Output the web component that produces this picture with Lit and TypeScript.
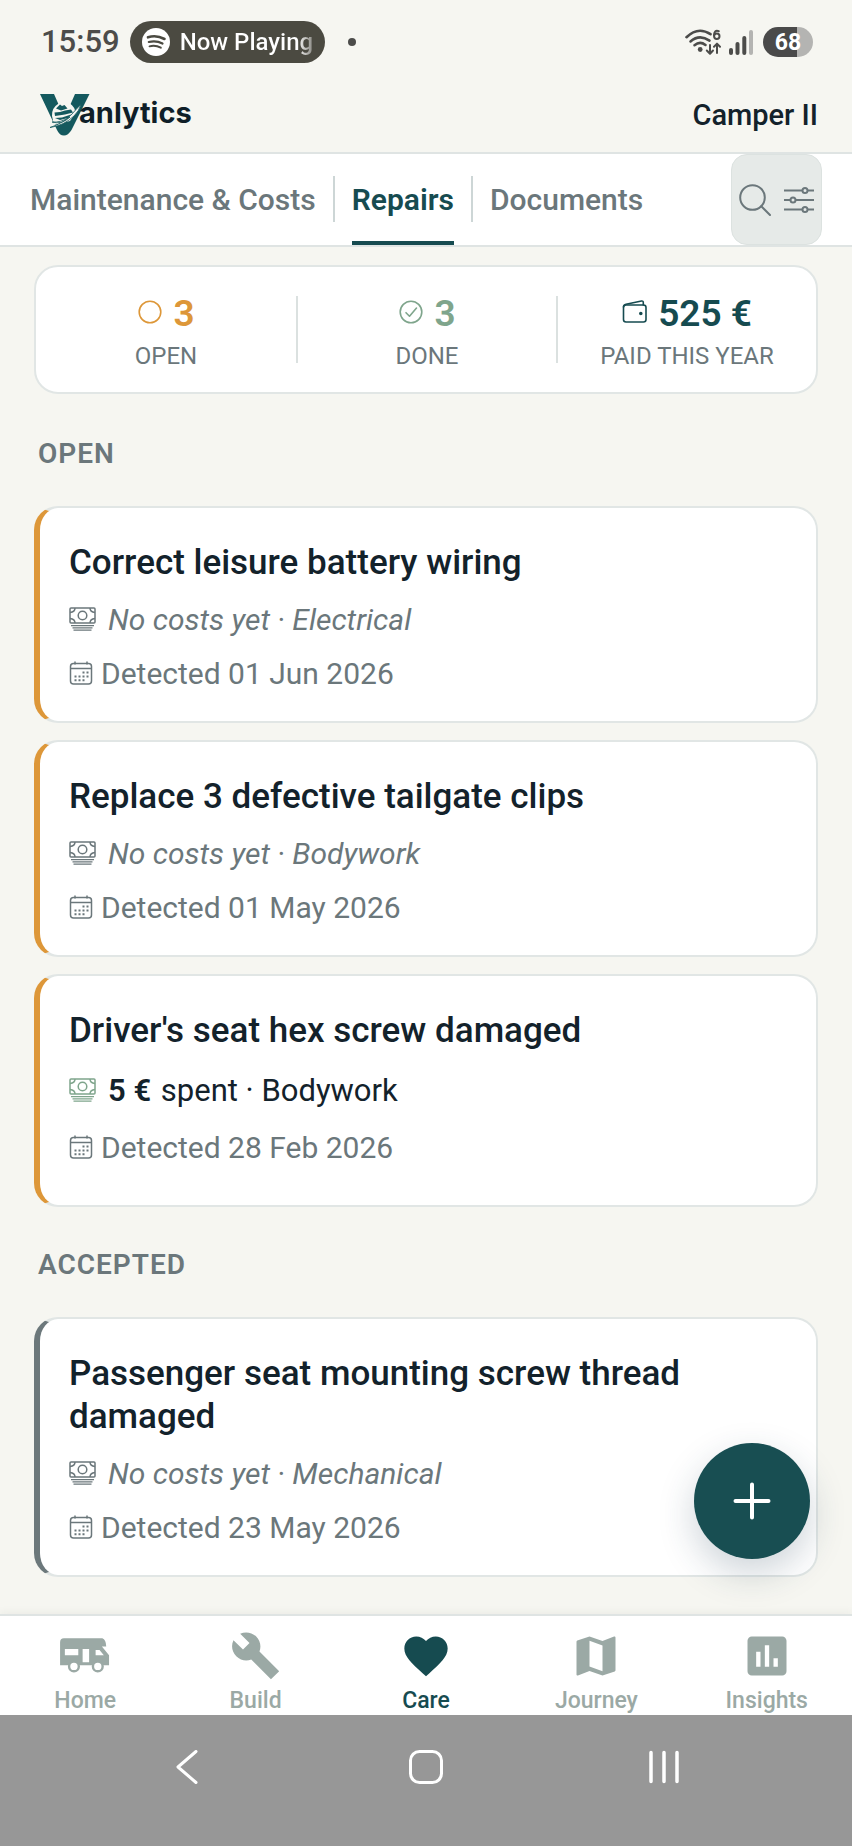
import { LitElement, html, css, svg } from "lit";
import { customElement, property, state } from "lit/decorators.js";
import { classMap } from "lit/directives/class-map.js";

interface Repair {
  title: string;
  category: string;
  detected: string;
  spent?: string;
}

const OPEN: Repair[] = [
  { title: "Correct leisure battery wiring", category: "Electrical", detected: "01 Jun 2026" },
  { title: "Replace 3 defective tailgate clips", category: "Bodywork", detected: "01 May 2026" },
  { title: "Driver's seat hex screw damaged", category: "Bodywork", detected: "28 Feb 2026", spent: "5 €" },
];

const ACCEPTED: Repair[] = [
  { title: "Passenger seat mounting screw thread damaged", category: "Mechanical", detected: "23 May 2026" },
];

const NAV = [
  {
    label: "Home",
    icon: svg`
      <path fill-rule="evenodd" d="M2.300 3.800H20Q21.700 4.400 21.800 7.600H19.800L23.100 11.600V16.300H.5V5.600Q.5 3.800 2.300 3.800ZM2.700 8.800V11.700H8.900V8.800ZM10.900 8.800V14.900H13.900V8.800ZM16.900 9.200V11.700H20.700L18.700 9.200Z"/>
      <circle cx="6.900" cy="16.800" r="2.250" fill="#fff" stroke="currentColor" stroke-width="1.100"/>
      <circle cx="17.900" cy="16.800" r="2.250" fill="#fff" stroke="currentColor" stroke-width="1.100"/>`,
  },
  {
    label: "Build",
    icon: svg`<path d="M22.7 19l-9.1-9.1c.9-2.3.4-5-1.5-6.900-2-2-5-2.400-7.400-1.300L9 6 6 9 1.600 4.700C.4 7.100.9 10.100 2.900 12.100c1.900 1.900 4.600 2.400 6.900 1.500l9.100 9.100z"/>`,
  },
  {
    label: "Care",
    icon: svg`<path d="M12 21.35l-1.45-1.32C5.4 15.36 2 12.28 2 8.5 2 5.42 4.42 3 7.5 3c1.74 0 3.41.81 4.5 2.09C13.09 3.81 14.76 3 16.5 3 19.58 3 22 5.42 22 8.5c0 3.78-3.4 6.86-8.55 11.54L12 21.35z"/>`,
  },
  {
    label: "Journey",
    icon: svg`<path d="M20.5 3l-.16.03L15 5.1 9 3 3.36 4.9c-.21.07-.36.25-.36.48V20.5c0 .28.22.5.5.5l.16-.03L9 18.9l6 2.1 5.64-1.9c.21-.07.36-.25.36-.48V3.5c0-.28-.22-.5-.5-.5zM15 19l-6-2.11V5l6 2.11V19z"/>`,
  },
  {
    label: "Insights",
    icon: svg`<path d="M19 3H5c-1.1 0-2 .9-2 2v14c0 1.1.9 2 2 2h14c1.1 0 2-.9 2-2V5c0-1.1-.9-2-2-2zM9 17H7v-7h2v7zm4 0h-2V7h2v10zm4 0h-2v-4h2v4z"/>`,
  },
];

@customElement("status-bar")
export class StatusBar extends LitElement {
  static styles = css`
    :host {
      display: flex;
      align-items: center;
      height: 42px;
      padding: 21px 39px 0 41px;
      color: #4c4c4a;
    }
    .time { font-size: 31px; font-weight: 500; line-height: 42px; }
    .pill {
      display: flex;
      align-items: center;
      gap: 10px;
      height: 42px;
      width: 195px;
      box-sizing: border-box;
      margin-left: 10px;
      padding-left: 12px;
      border-radius: 21px;
      background: #4b4a41;
      color: #fff;
      font-size: 24px;
      font-weight: 500;
      white-space: nowrap;
    }
    .playing {
      background: linear-gradient(90deg, #fff 88%, #8a8983 100%);
      -webkit-background-clip: text;
      background-clip: text;
      color: transparent;
    }
    .dot { width: 8px; height: 8px; margin-left: 23px; border-radius: 4px; background: #4c4c4a; }
    .spacer { flex: 1; }
    .signals { display: flex; align-items: center; gap: 8px; }
    .battery {
      display: flex;
      align-items: center;
      justify-content: center;
      width: 50px;
      height: 30px;
      margin-left: 2px;
      border-radius: 15px;
      background: linear-gradient(90deg, #4a4a4a 67%, #b4b4b2 67%);
      color: #fff;
      font-size: 23px;
      font-weight: 700;
    }
  `;
  render() {
    return html`
      <span class="time">15:59</span>
      <div class="pill">
        <svg width="28" height="28" viewBox="0 0 28 28" aria-hidden="true">
          <circle cx="14" cy="14" r="14" fill="#fff" />
          <g fill="none" stroke="#4b4a41" stroke-linecap="round">
            <path d="M6 9.300q8.500-2.600 16.500 1.700" stroke-width="2.600" />
            <path d="M6.800 14q7.200-2 13.700 1.500" stroke-width="2.200" />
            <path d="M7.500 18.300q6-1.500 11.300 1.400" stroke-width="1.900" />
          </g>
        </svg>
        <span class="playing">Now Playing</span>
      </div>
      <span class="dot"></span>
      <span class="spacer"></span>
      <div class="signals">
        <svg width="36" height="28" viewBox="0 0 36 28" role="img" aria-label="Wi-Fi 6">
          <g fill="none" stroke="#4c4c4a" stroke-width="2.600" stroke-linecap="round">
            <path d="M1.500 9.200Q13-2 25.500 6.200" />
            <path d="M5.500 13.400Q14.500 5.600 24.500 12.600" />
            <path d="M9.500 17.200Q15 12.800 20.500 17" />
          </g>
          <circle cx="15.200" cy="21.500" r="2.400" fill="#4c4c4a" />
          <g fill="none" stroke="#4c4c4a" stroke-width="2" stroke-linecap="round" stroke-linejoin="round">
            <path d="M25 17V25.500M21.800 22.500L25 25.700L28 22.500" />
            <path d="M32 25V16M29 18.700L32 15.600L35 18.700" />
            <path d="M33.800 3.200Q29 1.600 29 7.600" />
            <circle cx="31.800" cy="8.300" r="2.700" />
          </g>
        </svg>
        <svg width="24" height="26" viewBox="0 0 24 26" role="img" aria-label="Signal">
          <g fill="#4c4c4a">
            <rect x="0" y="19" width="4" height="7" rx="2" />
            <rect x="6.500" y="13" width="4" height="13" rx="2" />
            <rect x="13.300" y="7" width="4" height="19" rx="2" />
            <rect x="20" y="1" width="4" height="25" rx="2" fill="#b4b4b2" />
          </g>
        </svg>
        <span class="battery">68</span>
      </div>
    `;
  }
}

@customElement("repair-card")
export class RepairCard extends LitElement {
  @property({ attribute: false }) repair!: Repair;
  @property() tone = "open";

  static styles = css`
    :host { display: block; }
    .card {
      display: flex;
      flex-direction: column;
      gap: 18px;
      padding: 33px 29px 29px;
      border: 2px solid #e1e6e5;
      border-left: 6px solid #dd9739;
      border-radius: 24px;
      background: #fff;
      color: #6b777b;
      font-size: 30px;
      line-height: 36px;
    }
    .accepted { border-left-color: #6c787b; }
    .paid { padding-bottom: 39px; }
    .title { margin: 0; color: #13222b; font-size: 35px; font-weight: 500; line-height: 43px; }
    .row { display: flex; align-items: center; margin: 0; }
    .row svg { flex: none; margin-bottom: 2px; }
    .cost { gap: 12px; font-style: italic; }
    .date { gap: 8px; }
    .paid .cost { font-style: normal; color: #13222b; font-size: 31px; line-height: 42px; }
    .paid .cost svg { color: #7fa58c; }
    .amount { margin-right: 2px; font-weight: 600; }
  `;
  render() {
    const r = this.repair;
    return html`
      <article class=${classMap({ card: true, paid: !!r.spent, accepted: this.tone === "accepted" })}>
        <h3 class="title">${r.title}</h3>
        <p class="row cost">
          <svg width="27" height="24" viewBox="0 0 27 24" fill="none" stroke="currentColor" stroke-width="1.500" aria-hidden="true">
            <rect x="1" y="1" width="25" height="15" rx="1" />
            <circle cx="13.500" cy="8.500" r="4.300" />
            <path d="M6 1Q6 5 1 5.500M21 1Q21 5 26 5.500M6 16Q6 12 1 11.500M21 16Q21 12 26 11.500" />
            <path d="M2 18.600H25M3.500 20.900H23.500M4.500 23.200H22.500" stroke-width="1.300" />
          </svg>
          <span>${r.spent ? html`<strong class="amount">${r.spent}</strong> spent · ` : html`No costs yet · `}${r.category}</span>
        </p>
        <p class="row date">
          <svg width="24" height="24" viewBox="0 0 24 24" fill="none" stroke="currentColor" stroke-width="1.500" aria-hidden="true">
            <rect x="1.500" y="2.500" width="21" height="20.500" rx="3" />
            <path d="M1.500 7.500H22.500M6 .5V3.500M18 .5V3.500" />
            <path d="M13.500 11.500H19.500M5.500 15.500H19.500M5.500 19.300H15.500" stroke-width="2" stroke-dasharray="2 2" />
          </svg>
          <span>Detected ${r.detected}</span>
        </p>
      </article>
    `;
  }
}

@customElement("app-root")
export class AppRoot extends LitElement {
  @state() private tab = "Repairs";
  @state() private page = "Care";

  static styles = css`
    :host {
      display: flex;
      flex-direction: column;
      min-height: 100vh;
      background: #f6f6f1;
      color: #13222b;
      font-family: Roboto, "Liberation Sans", sans-serif;
    }
    button { border: 0; padding: 0; background: none; color: inherit; font: inherit; cursor: pointer; }
    a { color: inherit; text-decoration: none; }

    .brandbar {
      display: flex;
      align-items: center;
      justify-content: space-between;
      height: 75px;
      padding: 14px 34px 0 40px;
      border-bottom: 2px solid #dfe4e3;
    }
    .brand { display: flex; align-items: center; }
    .brand svg { flex: none; }
    .word { margin: 0 0 4px -11px; font-family: Inter, sans-serif; font-size: 29px; font-weight: 700; line-height: 36px; color: #0f1e28; }
    .vehicle { font-size: 29px; font-weight: 500; line-height: 36px; }

    .tabs {
      display: flex;
      align-items: stretch;
      height: 91px;
      padding: 0 30px 0 12px;
      border-bottom: 2px solid #dfe4e3;
      background: #fff;
      color: #6b777b;
      font-size: 30px;
      font-weight: 500;
    }
    .tab { display: flex; align-items: center; padding: 0 18px; position: relative; white-space: nowrap; }
    .tab + .tab::before {
      content: "";
      position: absolute;
      left: -1px;
      top: 22px;
      width: 2px;
      height: 46px;
      background: #cdd6d6;
    }
    .tab span { display: flex; align-items: center; height: 100%; box-sizing: border-box; border: solid transparent; border-width: 4px 0; }
    .tab.on { color: #164b50; font-weight: 600; }
    .tab.on span { border-bottom-color: #164b50; }
    .tools {
      display: flex;
      align-items: center;
      justify-content: center;
      gap: 12px;
      width: 91px;
      margin-left: auto;
      box-sizing: border-box;
      border: 1px solid #dce2e0;
      border-radius: 16px;
      background: #e6eae8;
    }

    main { flex: 1; position: relative; padding: 18px 34px 36px; }
    .summary {
      display: grid;
      grid-template-columns: repeat(3, 1fr);
      margin-bottom: 44px;
      padding: 29px 0;
      border: 2px solid #e1e6e5;
      border-radius: 24px;
      background: #fff;
    }
    .stat { display: flex; flex-direction: column; align-items: center; height: 67px; }
    .stat + .stat { border-left: 2px solid #dbe1e0; }
    .value { display: flex; align-items: center; gap: 10px; font-size: 37px; font-weight: 600; line-height: 36px; }
    .value svg { margin-bottom: 4px; }
    .amber { color: #dd9739; }
    .green { color: #7fa58c; }
    .teal { color: #164b50; }
    .label { margin-top: 10px; color: #6b777b; font-size: 24px; line-height: 28px; }

    .heading { margin: 42px 4px 36px; color: #6b777b; font-size: 28px; font-weight: 600; letter-spacing: 1px; line-height: 32px; }
    .list { display: flex; flex-direction: column; gap: 17px; }
    .fab {
      position: absolute;
      right: 42px;
      bottom: 55px;
      display: flex;
      align-items: center;
      justify-content: center;
      width: 116px;
      height: 116px;
      border-radius: 58px;
      background: #184e52;
      color: #fff;
      box-shadow: 0 14px 36px rgba(30, 60, 80, 0.22);
    }

    .nav {
      display: grid;
      grid-template-columns: repeat(5, 1fr);
      height: 99px;
      border-top: 2px solid #dfe4e3;
      background: #fff;
      box-shadow: 0 -2px 8px rgba(40, 50, 40, 0.05);
      color: #9ba9a5;
      font-size: 23px;
      font-weight: 500;
      line-height: 28px;
      overflow: hidden;
    }
    .item { display: flex; flex-direction: column; align-items: center; gap: 5px; padding-top: 14px; }
    .item.on { color: #164b50; }
    .system { display: flex; justify-content: center; gap: 204px; height: 131px; background: #979797; }
    .system button { display: flex; height: 104px; align-items: center; }
  `;

  private icon(name: string) {
    const shapes: Record<string, unknown> = {
      open: svg`<circle cx="13" cy="13" r="10.800" />`,
      done: svg`<circle cx="13" cy="13" r="10.800" /><path d="M8 13.700L11.500 17.200L18.500 9" />`,
      wallet: svg`<rect x="1.500" y="6" width="22.500" height="17" rx="2.500" /><path d="M1.500 8Q1.500 5.800 4 5.300L19.500 2Q21.300 1.700 21.300 3.700V6" /><circle cx="18.800" cy="14.500" r="1" fill="currentColor" />`,
    };
    return html`<svg width="26" height="26" viewBox="0 0 26 26" fill="none" stroke="currentColor" stroke-width="1.600" stroke-linecap="round" stroke-linejoin="round" aria-hidden="true">${shapes[name]}</svg>`;
  }

  render() {
    return html`
      <status-bar></status-bar>
      <header class="brandbar">
        <a class="brand" href="#" aria-label="Vanlytics">
          <svg width="50" height="42" viewBox="0 0 50 42" aria-hidden="true">
            <path d="M0 0H14L24.500 24L35 0H49.500L31.500 36Q28 41.500 24 41.500Q19.500 41.500 17 36Z" fill="#14595e" />
            <path d="M12 22Q11.500 14 18 10L24 5.500L30 9.500Q35 13 35.500 19L30 27L14 31Z" fill="#f6f6f1" />
            <path d="M16 14.500L20 10.500L22 12L24.500 11L27.500 14.500L21 16.500ZM14.500 18.500L20 18L25 16.500L31 15.500L33 18.500L25 20.500L15 22ZM15 24L22 23.500L31 20.500L28 24L20 26Z" fill="#14595e" />
            <path d="M10 33.500Q24 29 32 20Q37 14 41 10.500Q39 17 34 22Q24 31.500 10 33.500ZM12 28Q20 29 30 23Q22 31 12 28Z" fill="#f6f6f1" stroke="#14595e" stroke-width=".8" />
          </svg>
          <span class="word">anlytics</span>
        </a>
        <span class="vehicle">Camper II</span>
      </header>
      <nav class="tabs">
        ${["Maintenance & Costs", "Repairs", "Documents"].map(
          (t) => html`<button class=${classMap({ tab: true, on: t === this.tab })} @click=${() => (this.tab = t)}><span>${t}</span></button>`,
        )}
        <button class="tools" aria-label="Search and filter">
          <svg width="32" height="32" viewBox="0 0 32 32" fill="none" stroke="#6b777b" stroke-width="2" stroke-linecap="round">
            <circle cx="13.500" cy="13.500" r="12.300" /><path d="M22.300 22.300L31 31" />
          </svg>
          <svg width="32" height="32" viewBox="0 0 32 32" fill="none" stroke="#6b777b" stroke-width="2">
            <path d="M1 6.500H19.500M24.500 6.500H31M1 16H7.500M12.500 16H31M1 25.500H19.500M24.500 25.500H31" />
            <circle cx="22" cy="6.500" r="2.500" /><circle cx="10" cy="16" r="2.500" /><circle cx="22" cy="25.500" r="2.500" />
          </svg>
        </button>
      </nav>
      <main>
        <section class="summary">
          <div class="stat"><span class="value amber">${this.icon("open")}3</span><span class="label">OPEN</span></div>
          <div class="stat"><span class="value green">${this.icon("done")}3</span><span class="label">DONE</span></div>
          <div class="stat"><span class="value teal">${this.icon("wallet")}525 €</span><span class="label">PAID THIS YEAR</span></div>
        </section>
        <h2 class="heading">OPEN</h2>
        <div class="list">${OPEN.map((r) => html`<repair-card .repair=${r}></repair-card>`)}</div>
        <h2 class="heading">ACCEPTED</h2>
        <div class="list">${ACCEPTED.map((r) => html`<repair-card tone="accepted" .repair=${r}></repair-card>`)}</div>
        <button class="fab" aria-label="Add repair">
          <svg width="38" height="38" viewBox="0 0 38 38" stroke="currentColor" stroke-width="4" stroke-linecap="round"><path d="M19 2.500V35.500M2.500 19H35.500" /></svg>
        </button>
      </main>
      <nav class="nav">
        ${NAV.map(
          (n) => html`<a class=${classMap({ item: true, on: n.label === this.page })} href="#" @click=${(e: Event) => { e.preventDefault(); this.page = n.label; }}>
            <svg width="52" height="52" viewBox="0 0 24 24" fill="currentColor" aria-hidden="true">${n.icon}</svg>
            <span>${n.label}</span>
          </a>`,
        )}
      </nav>
      <footer class="system">
        <button aria-label="Back">
          <svg width="34" height="34" viewBox="0 0 34 34" fill="none" stroke="#fff" stroke-width="3" stroke-linecap="round" stroke-linejoin="round"><path d="M25 1.500L7 17L25 32.500" /></svg>
        </button>
        <button aria-label="Home screen">
          <svg width="34" height="34" viewBox="0 0 34 34" fill="none" stroke="#fff" stroke-width="3"><rect x="1.500" y="1.500" width="31" height="31" rx="9" /></svg>
        </button>
        <button aria-label="Recent apps">
          <svg width="34" height="34" viewBox="0 0 34 34" stroke="#fff" stroke-width="3.500" stroke-linecap="round"><path d="M4 2.500V31.500M17 2.500V31.500M30 2.500V31.500" /></svg>
        </button>
      </footer>
    `;
  }
}
